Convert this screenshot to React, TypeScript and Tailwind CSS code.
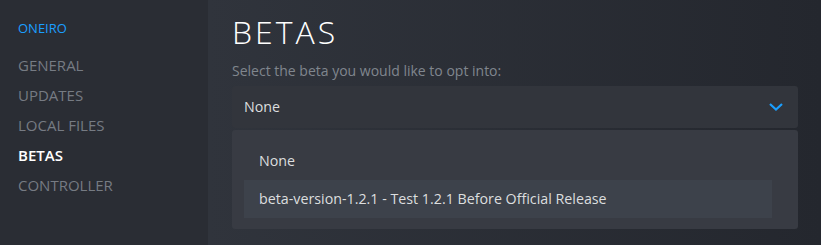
import React from "react";

const navItems = ["GENERAL", "UPDATES", "LOCAL FILES", "BETAS", "CONTROLLER"];
const options = ["None", "beta-version-1.2.1 - Test 1.2.1 Before Official Release"];

const Chevron = () => (
  <svg width="14" height="8" viewBox="0 0 14 8" fill="none">
    <path d="M1 1l6 5.5L13 1" stroke="#1a9fff" strokeWidth="2.2" />
  </svg>
);

const App = () => {
  return (
    <div className="flex h-[245px] w-[821px] overflow-hidden font-['Open_Sans',sans-serif]">
      {/* sidebar */}
      <aside className="w-[208px] shrink-0 bg-[#2a2d34] pl-[18px] pt-[19px]">
        <div className="text-[13px] leading-[19px] text-[#1a9fff]">ONEIRO</div>
        <nav className="mt-[12px] flex flex-col">
          {navItems.map((item) => (
            <div
              key={item}
              className={`h-[30px] text-[15px] leading-[30px] ${
                item === "BETAS" ? "font-semibold text-white" : "text-[#767b83]"
              }`}
            >
              {item}
            </div>
          ))}
        </nav>
      </aside>

      {/* content */}
      <main className="flex-1 bg-gradient-to-r from-[#30343c] to-[#24272e] pl-[24px] pr-[23px] pt-[12px]">
        <h1 className="text-[32px] font-light leading-[40px] tracking-[3px] text-white">BETAS</h1>
        <p className="mt-[9px] text-[14px] leading-[20px] text-[#80868e]">
          Select the beta you would like to opt into:
        </p>
        <div className="mt-[5px] flex h-[42px] items-center justify-between rounded-[3px] bg-[#32353c] pl-[12px] pr-[15px]">
          <span className="text-[14.25px] text-[#dcdedf]">None</span>
          <Chevron />
        </div>
        <div className="mt-[2px] rounded-[3px] bg-[#383b43] pb-[11px] pl-[12px] pr-[26px] pt-[12px]">
          {options.map((opt, i) => (
            <div
              key={opt}
              className={`flex h-[38px] items-center px-[15px] text-[14.25px] text-[#dcdedf] ${
                i === 1 ? "bg-[#3d424b]" : ""
              }`}
            >
              {opt}
            </div>
          ))}
        </div>
      </main>
    </div>
  );
};

export default App;
